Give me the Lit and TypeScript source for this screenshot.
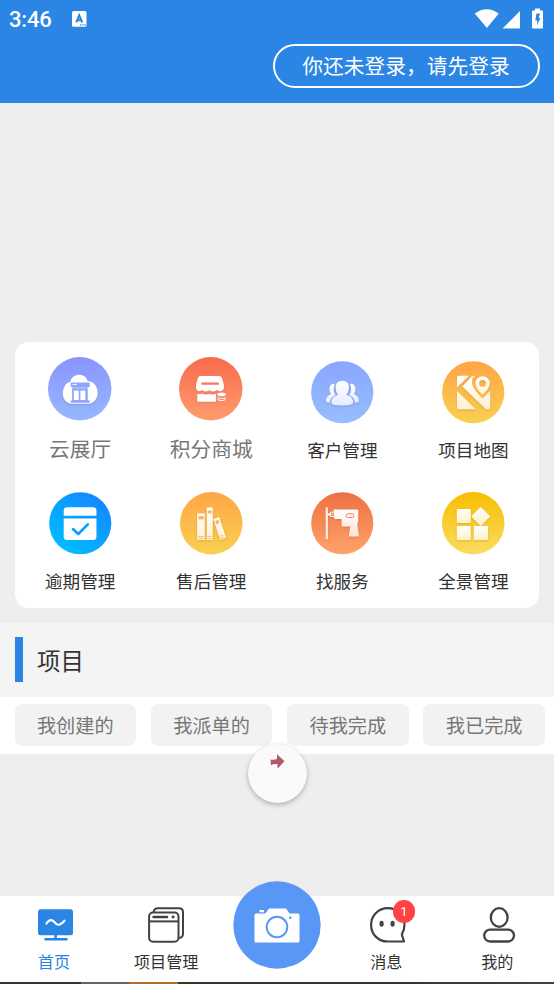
import { LitElement, html, css, svg } from "lit";
import { customElement, property } from "lit/decorators.js";

const grad = (id: string, a: string, b: string, diag = false) => svg`
  <linearGradient id=${id} x1=${diag ? 0.8 : 0.5} y1=${diag ? 0.1 : 0} x2=${diag ? 0.2 : 0.5} y2=${diag ? 0.9 : 1}>
    <stop offset="0" stop-color=${a}/><stop offset="1" stop-color=${b}/>
  </linearGradient>`;

const cloud = html`<svg viewBox="144.5 63.5 191 191"><defs>${grad("g", "#8a94ff", "#96b8ff")}</defs>
  <circle cx="240" cy="159" r="95.5" fill="url(#g)"/>
  <g class="shade"><path fill="#fff" d="M217 204C201 204 189 190 189 173C189 155 198 141 212 137C215 124 225 117 238 117C251 117 261 124 264 136C283 137 294 154 294 172C294 190 281 204 267 204Z"/></g>
  <g fill="#8ea4fd"><rect x="213" y="140" width="57" height="14" rx="2"/><path d="M217 154h47v40h6v7h-57v-7h4z"/></g>
  <g fill="#fff"><rect x="218" y="144.500" width="13" height="3"/><rect x="222" y="164" width="15" height="29" rx="2"/><rect x="242" y="164" width="15" height="29" rx="2"/></g>
  <path d="M217 156.500h47" stroke="#dfe6ff" stroke-width="2"/></svg>`;

const shop = html`<svg viewBox="537 63.500 191 191"><defs>${grad("g", "#f96a4c", "#ff9c6f")}</defs>
  <circle cx="632.500" cy="159" r="95.500" fill="url(#g)"/>
  <g class="shade" fill="#fff"><path d="M601 121h58q5 0 7 5l6 20v11a10 10 0 0 1-8 9q-8 2-13-3q-5 5-12 5t-10-5q-5 5-12 5t-10-5q-6 5-12 3q-7-3-7-11v-9l6-20q2-5 7-5z"/>
  <path d="M592 174q8 3 15-1q10 6 22 1q9 4 19 0v24h-54q-2 0-2-2z"/>
  <ellipse cx="665" cy="176" rx="13" ry="5.500"/>
  <path d="M652 183q13 8 26 0v3q-13 8-26 0zM652 189q13 8 26 0v3q-13 8-26 0zM652 195q13 8 26 0v1q-13 7-26 0z"/></g>
  <path d="M592 170q8 2 14-3q9 6 22 0q9 6 22 0" fill="none" stroke="#fc825d" stroke-width="4"/>
  <rect x="604" y="140" width="53" height="7" rx="1" fill="#fa7755"/></svg>`;

const people = html`<svg viewBox="101.500 75.500 187 188"><defs>${grad("g", "#88a6ff", "#98bdff")}${grad("w", "#ffffff", "#e4ecff")}</defs>
  <circle cx="195" cy="169.500" r="93.500" fill="url(#g)"/>
  <g class="shade" fill="url(#w)"><path d="M173 144q-15-2-17 16q0 9 5 15q-15 7-15 20q0 6 11 6q2-15 18-23q-10-13-2-34zM218 144q15-2 17 16q0 9-5 15q15 7 15 20q0 6-11 6q-2-15-18-23q10-13 2-34z"/>
  <path d="M195 135q20 0 20 21q0 13-8 21q21 7 21 23q0 9-33 9t-33-9q0-16 21-23q-8-8-8-21q0-21 20-21z"/></g></svg>`;

const map = html`<svg viewBox="495.500 75.500 187 188"><defs>${grad("g", "#ffa546", "#f9d04f")}${grad("w", "#ffffff", "#fff0cf")}</defs>
  <circle cx="589" cy="169.500" r="93.500" fill="url(#g)"/>
  <g class="shade" fill="url(#w)"><path d="M546 120h30l-36 36v-30q0-6 6-6zM540 166l57 55h-51q-6 0-6-6z"/>
  <path d="M585 121h9q-9 17-1 32l23 31l24-20v51q0 6-6 6h-7l-71-69z"/>
  <path fill-rule="evenodd" d="M617 121a22 22 0 0 1 22 22q0 13-22 35q-22-22-22-35a22 22 0 0 1 22-22zm0 12a10 10 0 1 0 0 20a10 10 0 0 0 0-20z"/></g>
  <path d="M590 125q-6 16 2 30q7 12 25 30L641 161" fill="none" stroke="#fbb64a" stroke-width="5"/></svg>`;

const calendar = html`<svg viewBox="144.500 50.500 189 188"><defs>${grad("g", "#1389ff", "#00bcff", true)}</defs>
  <circle cx="239" cy="144.500" r="94" fill="url(#g)"/>
  <path fill="#fff" d="M199 96h79q10 0 10 10v16h-99v-16q0-10 10-10zM189 130h99v55q0 10-10 10h-79q-10 0-10-10z"/>
  <path d="M217 162L233 177L262 148" fill="none" stroke="#0a9fff" stroke-width="8" stroke-linecap="round" stroke-linejoin="round"/></svg>`;

const books = html`<svg viewBox="537.500 50.500 188 188"><defs>${grad("g", "#ffa647", "#f9d04f")}${grad("w", "#ffffff", "#fff0cf")}</defs>
  <circle cx="631.500" cy="144.500" r="94" fill="url(#g)"/>
  <g class="shade" fill="url(#w)"><rect x="589" y="115" width="23" height="80"/><rect x="618" y="97" width="18" height="98"/><path d="M638 132L655 126L676 188L658 195Z"/></g>
  <g fill="#f9b555"><rect x="593" y="123" width="16" height="10"/><rect x="621" y="106" width="12" height="9"/><path d="M643 138l9-4 4 10-9 4zM592 183h17v2h-17zM592 189h17v2h-17zM620 183h13v2h-13zM620 189h13v2h-13zM657 182l10-3v2l-9 4zM659 188l10-3v2l-9 4z"/></g></svg>`;

const drill = html`<svg viewBox="101.500 50.500 187 188"><defs>${grad("g", "#ed7044", "#ffa469")}${grad("w", "#ffffff", "#ffe2d4")}</defs>
  <circle cx="195" cy="144.500" r="93.500" fill="url(#g)"/>
  <g class="shade"><rect x="145" y="96" width="7" height="97" rx="3" fill="#ffeadf"/><path fill="url(#w)" d="M152 115l7-1v-4h10v-7h70q4 0 4 4v33q0 4-3 5l5 36q0 3-3 3h-24q-3 0-3-3l4-27h-22q-4 0-4-3v-19h-20q-3 0-3-3v-3h-11v-4l-7-1z"/></g>
  <g fill="none" stroke="#ee8159" stroke-width="3"><rect x="163" y="114" width="6" height="7"/><rect x="207" y="116" width="23" height="11" rx="5"/></g></svg>`;

const panorama = html`<svg viewBox="495.500 50.500 188 188"><defs>${grad("g", "#f8bd00", "#f9dd61")}${grad("w", "#ffffff", "#fff0c4")}</defs>
  <circle cx="589.500" cy="144.500" r="94" fill="url(#g)"/>
  <g class="shade" fill="url(#w)"><rect x="540" y="102" width="42" height="42" rx="3"/><path d="M610 97q2-2 4 0l25 25q2 2 0 4l-25 25q-2 2-4 0l-25-25q-2-2 0-4z"/><rect x="540" y="153" width="42" height="42" rx="3"/><rect x="591" y="153" width="43" height="42" rx="3"/></g></svg>`;

const font = css`font-family: Roboto, "Noto Sans CJK SC", sans-serif;`;

@customElement("service-tile")
export class ServiceTile extends LitElement {
  @property() label = "";
  @property({ attribute: false }) icon: unknown;
  @property({ type: Boolean, reflect: true }) large = false;
  static styles = css`
    :host { display: flex; flex-direction: column; align-items: center; ${font} font-size: 17.6px; color: #333; padding-top: 18.500px; box-sizing: border-box; }
    svg { display: block; width: 62.500px; height: 62.500px; overflow: visible; }
    .label { line-height: 26px; margin-top: 14.800px; white-space: nowrap; }
    .shade { filter: drop-shadow(0 3px 3px rgba(100, 60, 60, 0.2)); }
    :host([large]) { font-size: 20.700px; color: #777; padding-top: 14.500px; }
    :host([large]) svg { width: 63.500px; height: 63.500px; }
    :host([large]) .label { line-height: 30px; margin-top: 15px; }
  `;
  render() {
    return html`${this.icon}<div class="label">${this.label}</div>`;
  }
}

const home = html`<svg viewBox="0 0 36 36"><rect x="0" y="2.200" width="35" height="26" rx="2.500" fill="#2b85e4"/><path d="M17.600 28v4M7.500 32.300h21" stroke="#2b85e4" stroke-width="2.600" stroke-linecap="round"/><path d="M8.500 16.500c3-4.500 6-4 8.500-.8s6 2.800 9.500-2" fill="none" stroke="#fff" stroke-width="2.200" stroke-linecap="round"/></svg>`;
const windows = html`<svg viewBox="0 0 36 36" fill="none" stroke="#424242" stroke-width="2"><path d="M5.500 5.200Q6 1.200 10 1.200H31Q35 1.200 35 5.200V26.500Q35 30.500 31 31"/><rect x="1.100" y="5.500" width="29.400" height="29.200" rx="4"/><path d="M1 14.400h29.500"/><path d="M5.500 10h13.500" stroke-width="2.500" stroke-linecap="round"/><path d="M25 10h.2" stroke-width="2.800" stroke-linecap="round"/></svg>`;
const chat = html`<svg viewBox="0 0 36 36" fill="none" stroke="#424242" stroke-width="2.200"><path d="M34 34.500H17.700C8 34.500 1.100 27 1.100 17.900C1.100 8.500 8.500 1.200 17.700 1.200C27 1.200 34.500 8.500 34.500 17.500C34.500 21 33.500 24.500 31.800 27.500Z" stroke-linejoin="round"/><g fill="#424242" stroke="none"><ellipse cx="11.600" cy="16.800" rx="2.100" ry="3"/><ellipse cx="22.600" cy="16.800" rx="2.100" ry="3"/></g></svg>`;
const person = html`<svg viewBox="0 0 36 36" fill="none" stroke="#424242" stroke-width="2.300"><ellipse cx="18.200" cy="10.500" rx="8.400" ry="9.300"/><rect x="3.200" y="22.600" width="29.800" height="11.900" rx="5.900"/></svg>`;

@customElement("app-root")
export class AppRoot extends LitElement {
  static styles = css`
    :host { display: flex; flex-direction: column; position: relative; width: 554px; height: 984px; overflow: hidden; background: #eee; ${font} }
    svg { display: block; }
    .header { height: 103px; background: #2b85e4; color: #fff; flex: none; }
    .status { display: flex; align-items: center; height: 38px; padding: 0 9px; }
    .time { font-size: 22px; line-height: 38px; font-weight: 500; padding-top: 1px; width: 63px; letter-spacing: -.2px; }
    .signals { margin-left: auto; }
    .login { box-sizing: border-box; width: 267px; height: 44px; margin: 5.500px 14.500px 0 auto; border: 2px solid #fff; border-radius: 23px; font-size: 20.750px; line-height: 43px; text-align: center; }
    .card { display: grid; grid-template-columns: repeat(4, 1fr); grid-template-rows: 131.500px 134.500px; flex: none; margin: 239px 15px 0 14.600px; background: #fff; border-radius: 14px; }
    .title { display: flex; align-items: center; gap: 14.500px; flex: none; height: 74px; margin-top: 14.500px; padding-left: 14.500px; background: #f4f4f4; font-size: 23.400px; color: #333; }
    .mark { width: 8px; height: 45px; background: #2b85e4; }
    .chips { display: flex; gap: 14.800px; flex: none; height: 57px; box-sizing: border-box; padding: 7px 0 0 14.500px; background: #fff; }
    .chip { flex: none; width: 121.500px; height: 42px; border-radius: 8px; background: #f2f2f2; color: #777; font-size: 19.200px; line-height: 45px; text-align: center; }
    .nav { display: grid; grid-template-columns: repeat(5, 1fr); flex: none; height: 86.500px; margin-top: auto; background: #fff; }
    .tab { display: flex; flex-direction: column; align-items: center; padding-top: 11.500px; font-size: 16.100px; color: #333; }
    .tab svg { width: 36px; height: 36px; }
    .tab span { line-height: 24px; margin-top: 8px; }
    .tab.on { color: #2b85e4; }
    .first { padding-right: 3px; }
    .first svg { margin-left: 4px; }
    .fourth { padding-right: 3px; }
    .fourth .icon { margin-left: 2.500px; }
    .last { padding-right: 2.500px; }
    .last svg { margin-left: 3px; }
    .icon { position: relative; }
    .badge { position: absolute; left: 23px; top: -7px; width: 22.500px; height: 22.500px; border-radius: 50%; background: #ff4343; color: #fff; font-size: 13px; line-height: 23px; text-align: center; }
    .camera { position: absolute; left: 232.500px; top: 881px; width: 88px; height: 88px; }
    .float { position: absolute; left: 247.500px; top: 743.500px; width: 59px; height: 59px; border-radius: 50%; background: #fafafa; box-shadow: 0 2px 5px rgba(0,0,0,.26), 0 0 1px rgba(0,0,0,.1); }
    .strip { flex: none; height: 2px; background: linear-gradient(90deg, #2f3b28 81px, #5c6a57 81px 129.500px, #b46c2c 129.500px 178px, #2f3b28 178px 400px, #493f37); }
  `;
  render() {
    return html`
      <div class="header">
        <div class="status">
          <div class="time">3:46</div>
          <svg width="15" height="17" viewBox="0 0 15 17"><rect x="0" y="0" width="14.500" height="15.800" rx="1.500" fill="#fff"/><path d="M4.200 11.300L7.200 4.300L10.200 11.300M5.300 9.200h3.800" fill="none" stroke="#2b85e4" stroke-width="2"/><path d="M8 13.800h1.300M10.300 13.800h1.300M12.500 13.800h1.300" stroke="#2b85e4" stroke-width="1.200"/></svg>
          <svg class="signals" width="71" height="22" viewBox="474 7.500 71 22" fill="#fff"><path d="M474.800 13Q486.800 4.500 498.800 13L486.900 27.500ZM520 10.500V28H502.500ZM535 10V8h5v2h2q1 0 1 1v16q0 1-1 1h-9q-1 0-1-1V11q0-1 1-1z"/><path d="M536.500 13h3.500l-1.300 4.500h1.800L537 25l.3-5h-2z" fill="#2b85e4"/></svg>
        </div>
        <div class="login">你还未登录，请先登录</div>
      </div>
      <div class="card">
        <service-tile large label="云展厅" .icon=${cloud}></service-tile>
        <service-tile large label="积分商城" .icon=${shop}></service-tile>
        <service-tile label="客户管理" .icon=${people}></service-tile>
        <service-tile label="项目地图" .icon=${map}></service-tile>
        <service-tile label="逾期管理" .icon=${calendar}></service-tile>
        <service-tile label="售后管理" .icon=${books}></service-tile>
        <service-tile label="找服务" .icon=${drill}></service-tile>
        <service-tile label="全景管理" .icon=${panorama}></service-tile>
      </div>
      <div class="title"><div class="mark"></div>项目</div>
      <div class="chips">${["我创建的", "我派单的", "待我完成", "我已完成"].map((t) => html`<div class="chip">${t}</div>`)}</div>
      <div class="nav">
        <div class="tab on first">${home}<span>首页</span></div>
        <div class="tab">${windows}<span>项目管理</span></div>
        <div></div>
        <div class="tab fourth"><div class="icon">${chat}<div class="badge">1</div></div><span>消息</span></div>
        <div class="tab last">${person}<span>我的</span></div>
      </div>
      <div class="strip"></div>
      <div class="float"><svg width="59" height="59" viewBox="0 0 59 59"><path d="M22.500 15.500q3.500 .8 6.500-.5V10.200l7.500 7-7 7.500v-4.500q-4-.5-6.500 1z" fill="#b25968"/></svg></div>
      <svg class="camera" viewBox="0 0 88 88"><circle cx="44" cy="44" r="43.700" fill="#5897f6"/><path fill="#fff" d="M26.500 29h4.500v2.200h-4.500zM23 32.500h9.500l3.500-5h17l3.500 5H65q1.500 0 1.500 1.500v26q0 1.500-1.500 1.500H23q-1.500 0-1.500-1.500v-26q0-1.500 1.500-1.500z"/><circle cx="44" cy="46" r="10.300" fill="none" stroke="#5897f6" stroke-width="2"/><circle cx="57.300" cy="36.700" r="1.300" fill="#5897f6"/></svg>
    `;
  }
}
